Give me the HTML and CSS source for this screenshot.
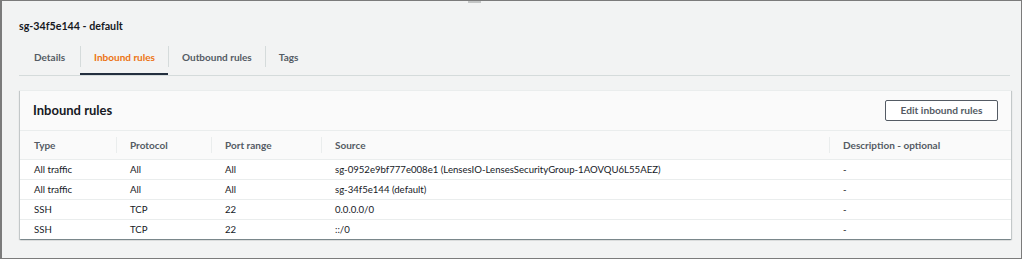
FILE: index.html
```html
<!DOCTYPE html>
<html lang="en">
<head>
    <meta charset="UTF-8">
    <title>sg-34f5e144 - default</title>
    <link rel="stylesheet" href="styles.css">
</head>
<body>
    <div class="frame">
        <div class="grip"></div>
        <h1 class="page-title">sg-34f5e144 - default</h1>

        <div class="tabs">
            <div class="tab">Details</div>
            <div class="tab active">Inbound rules</div>
            <div class="tab">Outbound rules</div>
            <div class="tab">Tags</div>
        </div>

        <div class="card">
            <div class="card-header">
                <h2>Inbound rules</h2>
                <button class="btn">Edit inbound rules</button>
            </div>
            <table class="rules">
                <thead>
                    <tr>
                        <th class="col-type">Type</th>
                        <th class="col-proto">Protocol</th>
                        <th class="col-port">Port range</th>
                        <th class="col-source">Source</th>
                        <th>Description - optional</th>
                    </tr>
                </thead>
                <tbody>
                    <tr>
                        <td>All traffic</td>
                        <td>All</td>
                        <td>All</td>
                        <td>sg-0952e9bf777e008e1 (LensesIO-LensesSecurityGroup-1AOVQU6L55AEZ)</td>
                        <td>-</td>
                    </tr>
                    <tr>
                        <td>All traffic</td>
                        <td>All</td>
                        <td>All</td>
                        <td>sg-34f5e144 (default)</td>
                        <td>-</td>
                    </tr>
                    <tr>
                        <td>SSH</td>
                        <td>TCP</td>
                        <td>22</td>
                        <td>0.0.0.0/0</td>
                        <td>-</td>
                    </tr>
                    <tr>
                        <td>SSH</td>
                        <td>TCP</td>
                        <td>22</td>
                        <td>::/0</td>
                        <td>-</td>
                    </tr>
                </tbody>
            </table>
        </div>
    </div>
</body>
</html>
```

FILE: styles.css
```css
* {
    margin: 0;
    padding: 0;
    box-sizing: border-box;
}

body {
    font-family: Lato, 'Liberation Sans', sans-serif;
    background: #f2f3f3;
    color: #16191f;
}

.frame {
    position: relative;
    width: 1022px;
    height: 259px;
    border: 1px solid #7b7b7b;
    border-left-width: 2px;
    background: #f2f3f3;
    padding: 16px 11px 0 17px;
}

.grip {
    position: absolute;
    top: 0;
    left: 466px;
    width: 13px;
    height: 2px;
    background: #c4c6c6;
}

.page-title {
    font-size: 10.7px;
    font-weight: 700;
    line-height: 18px;
    color: #16191f;
    margin-bottom: 3px;
}

.tabs {
    display: flex;
    height: 38px;
    border-bottom: 1px solid #d5dbdb;
}

.tab {
    position: relative;
    display: flex;
    align-items: center;
    padding: 0 13px 0 14px;
    font-size: 10px;
    font-weight: 700;
    color: #545b64;
}

.tab + .tab::before {
    content: "";
    position: absolute;
    left: 0;
    top: 8px;
    height: 21px;
    width: 1px;
    background: #d5dbdb;
}

.tab:first-child {
    padding-left: 15px;
    padding-right: 15px;
}

.tab.active {
    color: #ec7211;
    box-shadow: inset 0 -2px 0 #232f3e;
}

.card {
    margin-top: 14px;
    margin-left: 1px;
    width: 991px;
    background: #fff;
    box-shadow: 0 1px 1px rgba(0, 28, 36, 0.3), 1px 1px 1px rgba(0, 28, 36, 0.15), -1px 1px 1px rgba(0, 28, 36, 0.15);
    border-top: 1px solid #eaeded;
}

.card-header {
    display: flex;
    justify-content: space-between;
    align-items: center;
    height: 40px;
    padding: 0 13px 1px 13px;
    background: #fafafa;
    border-bottom: 1px solid #eaeded;
}

.card-header h2 {
    font-size: 13px;
    font-weight: 700;
    color: #16191f;
}

.btn {
    font-family: inherit;
    font-size: 10.2px;
    font-weight: 700;
    color: #545b64;
    background: #fff;
    border: 1px solid #545b64;
    border-radius: 2px;
    height: 21px;
    width: 113px;
}

.rules {
    width: 100%;
    border-collapse: collapse;
    font-size: 9.6px;
}

.rules th {
    position: relative;
    text-align: left;
    height: 28px;
    padding: 0 14px;
    font-size: 10px;
    font-weight: 700;
    color: #545b64;
    background: #fafafa;
    border-bottom: 1px solid #eaeded;
}

.rules th + th::before {
    content: "";
    position: absolute;
    left: 0;
    top: 6px;
    height: 16px;
    width: 1px;
    background: #eaeded;
}

.col-type { width: 96px; }
.col-proto { width: 95px; }
.col-port { width: 110px; }
.col-source { width: 508px; }

.rules td {
    height: 20px;
    padding: 0 14px;
    color: #16191f;
    border-bottom: 1px solid #eaeded;
}

.rules tr:last-child td {
    border-bottom: none;
}
```
